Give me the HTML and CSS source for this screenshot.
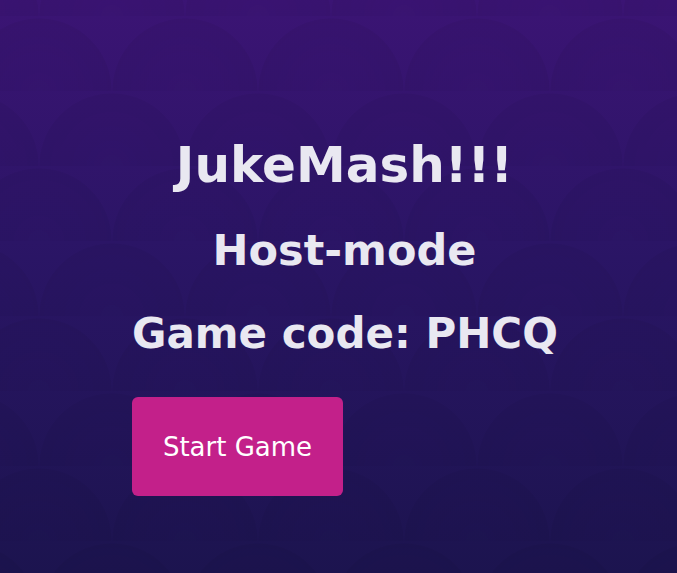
FILE: index.html
```html
<!DOCTYPE html>
<html lang="en">
<head>
    <meta charset="UTF-8">
    <meta name="viewport" content="width=device-width, initial-scale=1.0">
    <title>JukeMash - Host</title>
    <link rel="stylesheet" href="styles.css">
</head>
<body>

    <div id="host-panel">
        <h1 class="title">JukeMash!!!</h1>
        <h2 class="subtitle">Host-mode</h2>
        <h2 class="game-code">Game code: <span id="code">PHCQ</span></h2>

        <button type="button" id="start-btn">Start Game</button>
    </div>

</body>
</html>
```

FILE: styles.css
```css
html {
    height: 100%;
}

body {
    margin: 0;
    padding: 0;
    min-height: 100%;
    font-family: 'DejaVu Sans', sans-serif;
    color: #e9e8f1;
    background-color: #271461;
    /* fish scale pattern over a purple fade */
    background-image:
        radial-gradient(circle at 50% 100%, rgba(8, 0, 30, 0.02) 0, rgba(8, 0, 30, 0.06) 72px, transparent 73px),
        radial-gradient(circle at 50% 100%, rgba(8, 0, 30, 0.02) 0, rgba(8, 0, 30, 0.06) 72px, transparent 73px),
        linear-gradient(to bottom, #3b1474 0%, #2a1565 45%, #1c144f 100%);
    background-size: 146px 150px, 146px 150px, 100% 100%;
    background-position: 39px 16px, 112px 91px, 0 0;
    background-repeat: repeat, repeat, no-repeat;
}

#host-panel {
    width: 425px;
    margin: 0 auto;
    padding: 135px 0 0 12px;
    text-align: center;
}

.title {
    margin: 0;
    font-size: 50px;
    line-height: 60px;
    font-weight: bold;
}

.subtitle {
    margin: 30px 0 0;
    font-size: 43px;
    line-height: 50px;
    font-weight: bold;
}

.game-code {
    margin: 34px 0 0;
    font-size: 42px;
    line-height: 50px;
    font-weight: bold;
    white-space: nowrap;
}

#start-btn {
    display: flex;
    align-items: center;
    justify-content: center;
    width: 211px;
    height: 99px;
    margin-top: 38px;
    background-color: #c3208a;
    color: #fff;
    border: none;
    border-radius: 6px;
    font-family: 'DejaVu Sans', sans-serif;
    font-size: 26px;
    cursor: pointer;
}

#start-btn:hover {
    background-color: #ad1b7b;
}
```
